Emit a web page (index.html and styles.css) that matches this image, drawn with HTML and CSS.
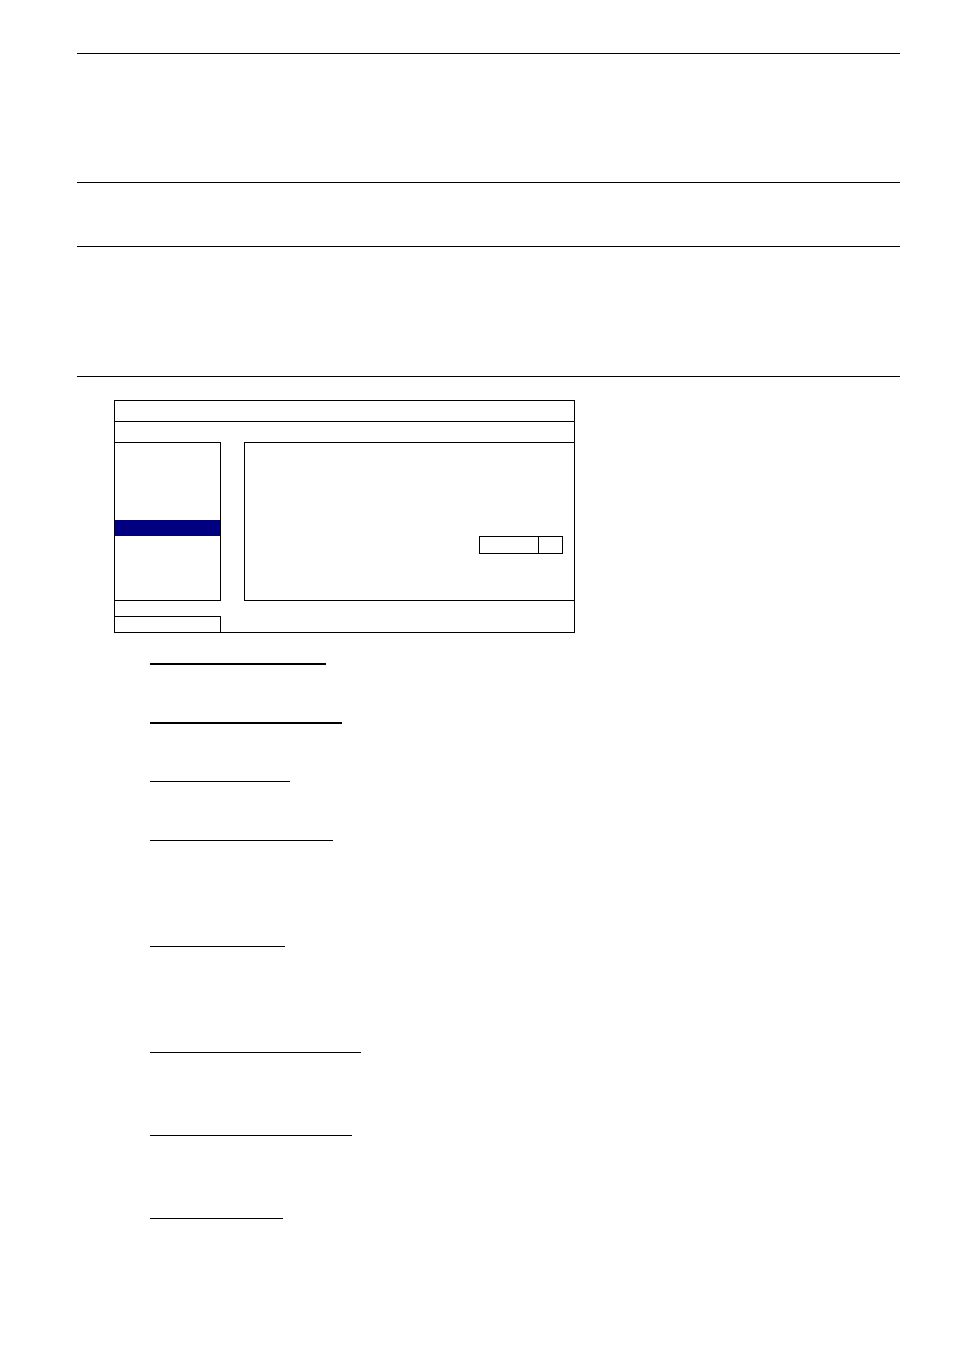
FILE: index.html
```html
<!DOCTYPE html>
<html lang="en">
<head>
    <meta charset="UTF-8">
    <title>Menu</title>
    <link rel="stylesheet" href="styles.css">
</head>
<body>
<div class="page">
    <div class="head tall"></div>
    <div class="head taller"></div>
    <div class="head"></div>
    <div class="head taller"></div>
    <div class="box">
        <div class="bar"></div>
        <div class="bar"></div>
        <div class="content">
            <ul class="left">
                <li></li>
                <li></li>
                <li></li>
                <li></li>
                <li class="active"></li>
                <li></li>
                <li></li>
                <li></li>
            </ul>
            <div class="right">
                <select class="choose" aria-label="Value">
                    <option></option>
                </select>
            </div>
        </div>
        <div class="foot">
            <div class="status"></div>
        </div>
    </div>
    <div class="list">
        <div class="item"><div class="name bold" style="width:176px"></div></div>
        <div class="item"><div class="name bold" style="width:192px"></div></div>
        <div class="item"><div class="name" style="width:140px"></div></div>
        <div class="item long"><div class="name" style="width:183px"></div></div>
        <div class="item long"><div class="name" style="width:135px"></div></div>
        <div class="item middle"><div class="name" style="width:211px"></div></div>
        <div class="item middle"><div class="name" style="width:202px"></div></div>
        <div class="item"><div class="name" style="width:133px"></div></div>
    </div>
</div>
</body>
</html>
```

FILE: styles.css
```css
*{
    box-sizing: border-box;
}
body,ul{
    margin:0;
    padding:0;
}
body{
    background: #fff;
    color: #000;
    font-family: "Liberation Sans", Arial, sans-serif;
    font-size: 16px;
}
.page{
    padding:0 54px 60px 77px;
}
/* empty blocks closed by a rule */
.head{
    height:64px;
    border-bottom:1px solid #000;
}
.tall{
    height:54px;
}
.taller{
    height:129px;
}
.head:nth-child(4){
    height:130px;
}
/* menu window */
.box{
    width:100%;
    max-width:461px;
    margin:23px 0 0 37px;
    border:1px solid #000;
}
.bar{
    height:21px;
    border-bottom:1px solid #000;
}
.bar + .bar{
    border-bottom:0;
    height:20px;
}
.content{
    display: flex;
    justify-content: space-between;
    height:159px;
}
.left{
    width:106px;
    padding-top:13px;
    border:1px solid #000;
    border-left:0;
    list-style: none;
}
.left li{
    height:16px;
}
.left .active{
    background: #000080;
}
.right{
    display: flex;
    justify-content: flex-end;
    align-items: flex-start;
    flex-grow: 1;
    margin-left:23px;
    padding:93px 11px 0 0;
    border:1px solid #000;
    border-right:0;
}
.choose{
    width:84px;
    height:18px;
    margin:0;
    padding:0 24px 0 4px;
    border:1px solid #000;
    border-radius: 0;
    appearance: none;
    /* line in front of the arrow cell */
    background: #fff linear-gradient(#000,#000) no-repeat right 23px top 0 / 1px 100%;
}
.foot{
    padding-top:15px;
}
.status{
    width:106px;
    height:16px;
    border-top:1px solid #000;
    border-right:1px solid #000;
}
/* underlined names */
.list{
    margin:7px 0 0 73px;
}
.item{
    min-height:59px;
}
.middle{
    min-height:83px;
}
.long{
    min-height:106px;
}
.name{
    height:24px;
    border-bottom:1px solid #000;
}
.bold{
    height:25px;
    border-bottom-width:2px;
}
```
